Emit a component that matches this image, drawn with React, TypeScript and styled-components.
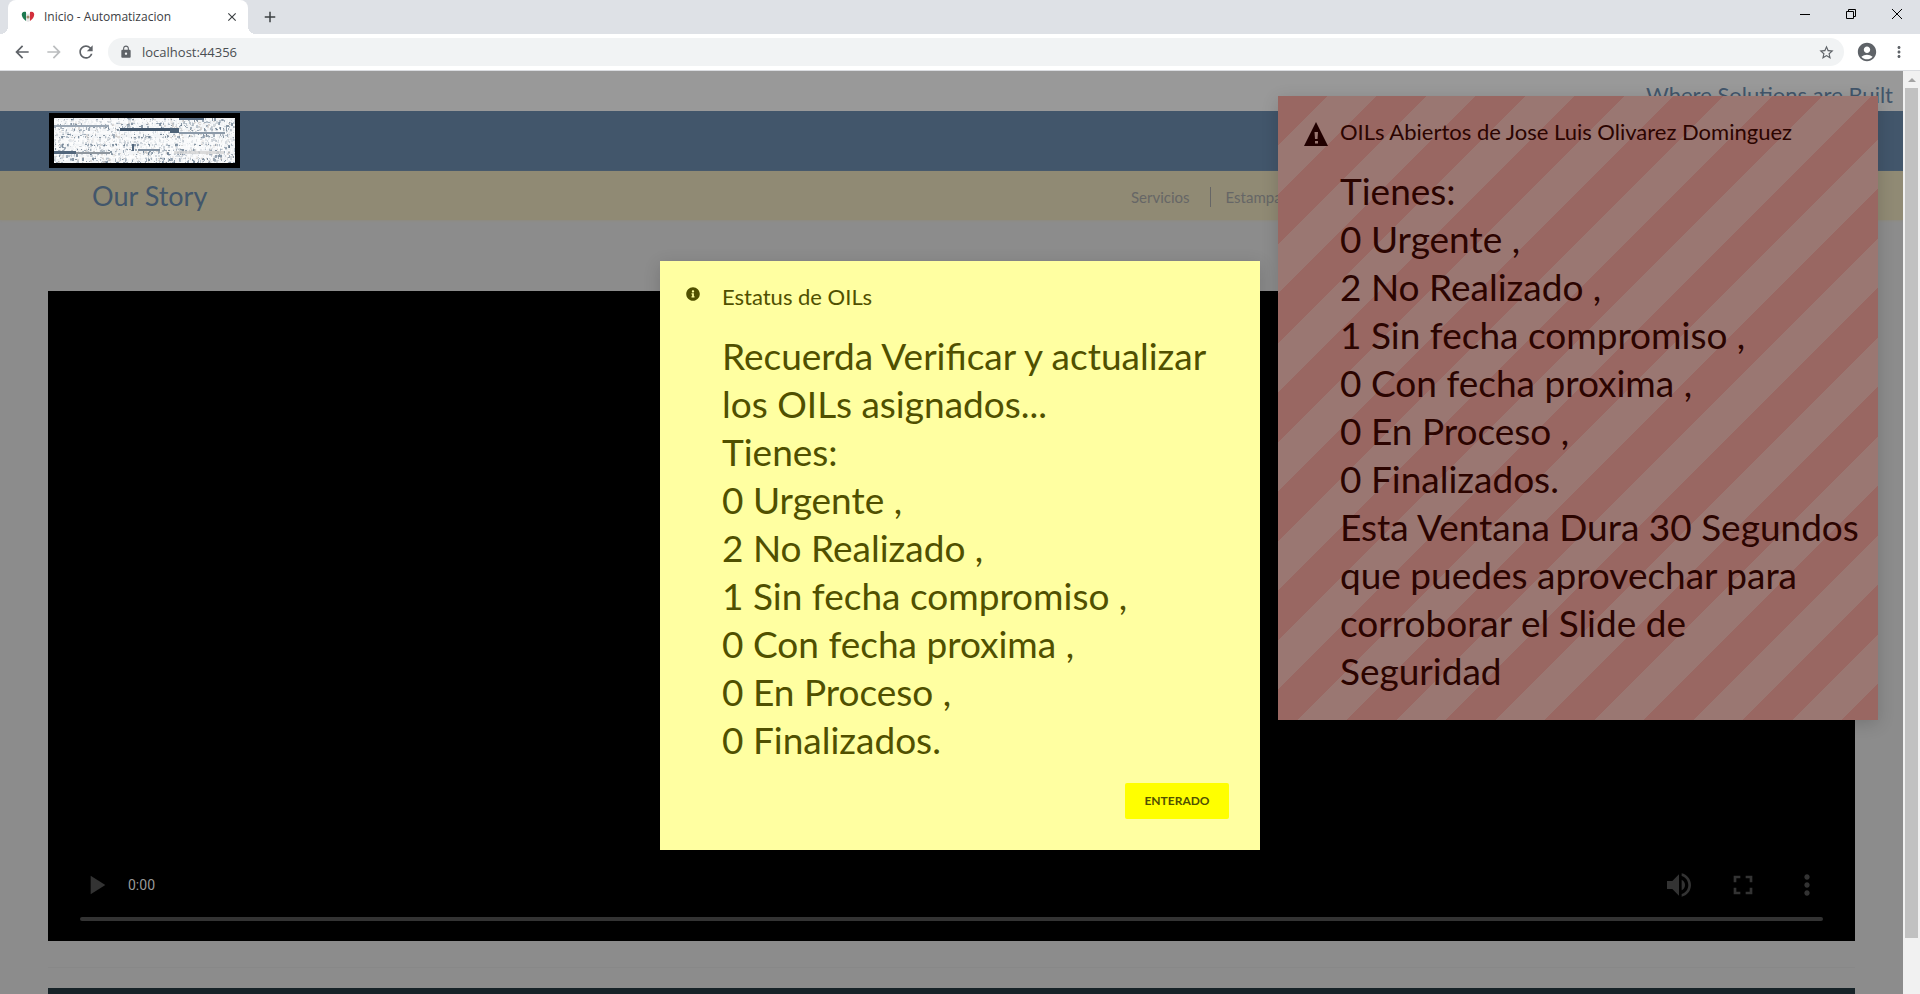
import React from "react";
import styled, { createGlobalStyle } from "styled-components";
import {
  MdArrowBack,
  MdArrowForward,
  MdRefresh,
  MdLock,
  MdStarBorder,
  MdAccountCircle,
  MdMoreVert,
  MdPlayArrow,
  MdVolumeUp,
  MdFullscreen,
  MdClose,
  MdAdd,
} from "react-icons/md";
import { FaInfoCircle } from "react-icons/fa";

const GlobalStyle = createGlobalStyle`
  *, *::before, *::after { box-sizing: border-box; }
  body { margin: 0; font-family: Lato, "Liberation Sans", sans-serif; }
  h1, h2, p, ul { margin: 0; padding: 0; font-weight: 400; }
  ul { list-style: none; }
  a { color: inherit; text-decoration: none; }
`;

const Window = styled.div`
  height: 100vh;
  display: flex;
  flex-direction: column;
  overflow: hidden;
`;

/* ---------- browser frame ---------- */
const TabStrip = styled.div`
  height: 34px;
  flex: none;
  display: flex;
  background: #dee1e6;
  padding-left: 8px;
`;
const Tab = styled.div`
  position: relative;
  width: 240px;
  display: flex;
  align-items: center;
  gap: 9px;
  padding: 0 9px 0 13px;
  background: #fff;
  border-radius: 8px 8px 0 0;
  font: 12px/16px "Open Sans", sans-serif;
  color: #3c4043;
  &::before, &::after {
    content: "";
    position: absolute;
    bottom: 0;
    width: 8px;
    height: 8px;
  }
  &::before {
    left: -8px;
    background: radial-gradient(circle at 0 0, transparent 8px, #fff 8px);
  }
  &::after {
    right: -8px;
    background: radial-gradient(circle at 100% 0, transparent 8px, #fff 8px);
  }
`;
const TabTitle = styled.span`
  flex: 1;
  white-space: nowrap;
`;
const IconButton = styled.button<{ $size: number; $color?: string }>`
  display: flex;
  align-items: center;
  justify-content: center;
  border: 0;
  padding: 0;
  background: none;
  width: ${(p) => p.$size}px;
  height: ${(p) => p.$size}px;
  color: ${(p) => p.$color ?? "#5f6368"};
  svg { width: 100%; height: 100%; }
`;
const NewTab = styled.div`
  display: flex;
  align-items: center;
  padding-left: 13px;
`;
const WindowControls = styled.div`
  margin-left: auto;
  display: flex;
  align-items: center;
  gap: 36px;
  padding: 0 18px 6px 0;
`;
const Toolbar = styled.div`
  height: 37px;
  flex: none;
  display: flex;
  align-items: center;
  padding: 0 12px 0 12px;
  background: #fff;
  border-bottom: 1px solid #dadce0;
`;
const NavButtons = styled.div`
  display: flex;
  gap: 12px;
  margin-right: 12px;
`;
const Address = styled.div`
  flex: 1;
  height: 28px;
  display: flex;
  align-items: center;
  gap: 9px;
  padding: 0 9px 0 11px;
  border-radius: 14px;
  background: #f1f3f4;
  color: #5f6368;
`;
const Url = styled.input`
  flex: 1;
  min-width: 0;
  border: 0;
  padding: 0;
  background: none;
  font: 13px/20px "Open Sans", sans-serif;
  color: #4a4e52;
`;
const ToolbarEnd = styled.div`
  display: flex;
  align-items: center;
  gap: 12px;
  margin-left: 12px;
`;

/* ---------- page ---------- */
const Viewport = styled.div`
  position: relative;
  flex: 1;
  min-height: 0;
  display: flex;
  overflow: hidden;
`;
const Page = styled.div`
  flex: 1;
  min-width: 0;
  background: #8c8c8c;
`;
const Tagline = styled.p`
  height: 40px;
  padding: 8px 10px 0 0;
  background: #999;
  color: #42566b;
  text-align: right;
  font-size: 22px;
  line-height: 32px;
`;
const Brand = styled.header`
  height: 60px;
  padding: 2px 49px;
  background: #42566b;
`;
const Logo = styled.svg`
  display: block;
  width: 191px;
  height: 55px;
  border: 5px solid #000;
  background: #e4e8ec;
`;
const SubHeader = styled.div`
  height: 49px;
  display: flex;
  align-items: center;
  background: #908a74;
  box-shadow: 0 1px 2px #8e8b80;
`;
const Story = styled.h1`
  flex: 1;
  padding: 0 0 0 92px;
  color: #42566b;
  font-size: 27px;
  line-height: 32px;
`;
const Menu = styled.ul`
  display: flex;
  width: 772px;
  padding-top: 3px;
  font-size: 15px;
  line-height: 20px;
  color: #666;
`;
const MenuItem = styled.li`
  padding: 0 20px 0 15px;
  & + & { border-left: 1px solid #666; }
  &:first-child { padding-left: 0; }
`;
const Main = styled.main`
  padding: 71px 48px 0;
`;
const Video = styled.section`
  aspect-ratio: 1807 / 650;
  display: flex;
  flex-direction: column;
  justify-content: flex-end;
  padding: 0 32px 20px;
  background: #000;
  color: #333;
`;
const Controls = styled.div`
  display: flex;
  align-items: center;
  gap: 32px;
  padding-bottom: 16px;
`;
const Time = styled.span`
  flex: 1;
  margin-left: -16px;
  font: 14px/20px Roboto, sans-serif;
  color: #999;
`;
const Progress = styled.input`
  appearance: none;
  width: 100%;
  height: 4px;
  margin: 0;
  border-radius: 2px;
  background: #333;
  &::-webkit-slider-thumb { appearance: none; width: 0; height: 0; }
`;
const Rule = styled.hr`
  margin: 26px 0 20px;
  border: 0;
  border-top: 1px solid #888;
`;
const Footer = styled.div`
  height: 60px;
  background: #172328;
`;
const Scrollbar = styled.div`
  width: 17px;
  flex: none;
  display: flex;
  flex-direction: column;
  align-items: center;
  gap: 6px;
  padding: 7px 2px 56px;
  background: #f1f1f1;
`;
const Thumb = styled.div`
  flex: 1;
  width: 13px;
  background: #c1c1c1;
`;

/* ---------- notices ---------- */
const Notice = styled.section`
  position: absolute;
  width: 600px;
  padding: 20px 16px 0 62px;
  font-size: 37px;
  line-height: 48px;
  box-shadow: 0 4px 16px rgba(0, 0, 0, 0.16);
`;
const Toast = styled(Notice)`
  top: 25px;
  right: 42px;
  padding-bottom: 25px;
  color: #2b0400;
  background: repeating-linear-gradient(
    135deg, #996762 0, #996762 35px, #9a7772 35px, #9a7772 70px);
`;
const Dialog = styled(Notice)`
  top: 190px;
  left: 50%;
  margin-left: -300px;
  padding-bottom: 31px;
  background: #ffffa1;
  color: #505000;
`;
const NoticeTitle = styled.h2`
  font-size: 22px;
  line-height: 32px;
  margin-bottom: 19px;
`;
const NoticeIcon = styled.span<{ $top: number }>`
  position: absolute;
  left: 26px;
  top: ${(p) => p.$top}px;
  display: flex;
`;
const Actions = styled.div`
  display: flex;
  justify-content: flex-end;
  padding: 19px 15px 0 0;
`;
const Accept = styled.button`
  width: 104px;
  height: 36px;
  border: 0;
  border-radius: 2px;
  background: #ff0;
  color: #505000;
  font: 700 12px/16px Lato, sans-serif;
`;

function logoMarks() {
  const shades = ["#5d7085", "#8192a3", "#a3afbc", "#c3cad2", "#ffffff", "#ffffff", "#ffffff", "#d0ccc9"];
  let seed = 7;
  const next = () => {
    seed = (seed * 16807) % 2147483647;
    return seed / 2147483647;
  };
  return Array.from({ length: 2200 }, (_, i) => {
    const x = Math.floor(next() * 181);
    const y = Math.floor(next() * 45);
    const shade = shades[Math.floor(next() * shades.length)];
    const w = 1 + Math.floor(next() * 2);
    const h = 1 + Math.floor(next() * 3);
    return <rect key={i} x={x} y={y} width={w} height={h} fill={shade} opacity={0.7} />;
  });
}

const BrandLogo = () => (
  <Logo viewBox="0 0 181 45" preserveAspectRatio="none" aria-label="Logo">
    <rect width="181" height="45" fill="#f2f4f6" />
    {logoMarks()}
    <g fill="#fff" opacity="0.6">
      <rect y="2" width="120" height="3" />
      <rect y="13" width="181" height="3" />
      <rect y="20" width="181" height="6" />
      <rect y="28" x="20" width="150" height="3" />
      <rect y="37" x="30" width="130" height="3" />
    </g>
    <rect x="66" y="10" width="58" height="3" fill="#42566b" />
    <rect x="116" y="10" width="9" height="5" fill="#4e6277" />
    <rect x="125" width="25" height="2" fill="#5d7085" />
    <rect x="125" y="14" width="46" height="2" fill="#8c9aa9" />
    <rect y="7" width="55" height="2" fill="#9aa6b3" />
    <rect y="33" width="22" height="3" fill="#52667b" />
    <rect x="22" y="34" width="34" height="2" fill="#8f979f" />
    <rect x="78" y="26" width="2" height="7" fill="#52667b" />
    <rect x="84" y="31" width="22" height="2" fill="#7f8fa0" />
    <rect x="120" y="33" width="50" height="3" fill="#d4d4d4" opacity="0.8" />
  </Logo>
);

const Counts = () => (
  <>
    <p>Tienes:</p>
    <p>0 Urgente ,</p>
    <p>2 No Realizado ,</p>
    <p>1 Sin fecha compromiso ,</p>
    <p>0 Con fecha proxima ,</p>
    <p>0 En Proceso ,</p>
    <p>0 Finalizados.</p>
  </>
);

export default function App() {
  return (
    <Window>
      <GlobalStyle />
      <TabStrip>
        <Tab>
          <svg width="14" height="14" viewBox="0 0 14 14">
            <path d="M5 2C2 1 0 3 1 6c1 3 3 4 4 5z" fill="#1d7a50" />
            <path d="M9 2c3-1 5 1 4 4-1 3-3 4-4 5z" fill="#d32f3c" />
            <path d="M5 3l2 1 2-1v8l-2 1-2-1z" fill="#e6e6e6" />
            <circle cx="7" cy="7" r="1.5" fill="#a08c6c" />
          </svg>
          <TabTitle>Inicio - Automatizacion</TabTitle>
          <IconButton $size={14} $color="#3c4043" aria-label="Cerrar"><MdClose /></IconButton>
        </Tab>
        <NewTab>
          <IconButton $size={18} $color="#3c4043" aria-label="Nueva"><MdAdd /></IconButton>
        </NewTab>
        <WindowControls>
          <IconButton $size={10} aria-label="Minimizar">
            <svg viewBox="0 0 10 10"><path d="M0 5.5h10" stroke="#000" /></svg>
          </IconButton>
          <IconButton $size={10} aria-label="Restaurar">
            <svg viewBox="0 0 10 10" fill="none" stroke="#000"><path d="M.5 2.5h7v7h-7zM2.500 2.500v-2h7v7h-2" /></svg>
          </IconButton>
          <IconButton $size={10} aria-label="Salir">
            <svg viewBox="0 0 10 10"><path d="M0 0l10 10M10 0L0 10" stroke="#000" /></svg>
          </IconButton>
        </WindowControls>
      </TabStrip>
      <Toolbar>
        <NavButtons>
          <IconButton $size={20} aria-label="Atrás"><MdArrowBack /></IconButton>
          <IconButton $size={20} $color="#bbbdbf" aria-label="Adelante"><MdArrowForward /></IconButton>
          <IconButton $size={20} aria-label="Recargar"><MdRefresh /></IconButton>
        </NavButtons>
        <Address>
          <MdLock size={14} />
          <Url aria-label="Dirección" defaultValue="localhost:44356" />
          <IconButton $size={17} aria-label="Favorito"><MdStarBorder /></IconButton>
        </Address>
        <ToolbarEnd>
          <IconButton $size={22} aria-label="Perfil"><MdAccountCircle /></IconButton>
          <IconButton $size={18} aria-label="Menú"><MdMoreVert /></IconButton>
        </ToolbarEnd>
      </Toolbar>

      <Viewport>
        <Page>
          <Tagline>Where Solutions are Built</Tagline>
          <Brand><BrandLogo /></Brand>
          <SubHeader>
            <Story>Our Story</Story>
            <Menu>
              <MenuItem><a href="#servicios">Servicios</a></MenuItem>
              <MenuItem><a href="#estampado">Estampado</a></MenuItem>
            </Menu>
          </SubHeader>
          <Main>
            <Video>
              <Controls>
                <IconButton $size={32} $color="#333" aria-label="Reproducir"><MdPlayArrow /></IconButton>
                <Time>0:00</Time>
                <IconButton $size={32} $color="#333" aria-label="Volumen"><MdVolumeUp /></IconButton>
                <IconButton $size={32} $color="#333" aria-label="Pantalla completa"><MdFullscreen /></IconButton>
                <IconButton $size={32} $color="#333" aria-label="Opciones"><MdMoreVert /></IconButton>
              </Controls>
              <Progress type="range" defaultValue={0} aria-label="Progreso" />
            </Video>
            <Rule />
            <Footer />
          </Main>
        </Page>
        <Scrollbar>
          <svg width="8" height="4" viewBox="0 0 8 4"><path d="M0 4l4-4 4 4z" fill="#a3a3a3" /></svg>
          <Thumb />
        </Scrollbar>

        <Toast role="alert">
          <NoticeIcon $top={26}>
            <svg width="24" height="24" viewBox="0 0 24 24">
              <path d="M12 0l12 24H0z" fill="#210000" />
              <path d="M10.500 10h3.500l-.5 7h-2.500zM11 19h3v2.500h-3z" fill="#9a7772" />
            </svg>
          </NoticeIcon>
          <NoticeTitle>OILs Abiertos de Jose Luis Olivarez Dominguez</NoticeTitle>
          <Counts />
          <p>
            Esta Ventana Dura 30 Segundos que puedes aprovechar para corroborar el Slide de
            <br />
            Seguridad
          </p>
        </Toast>

        <Dialog role="dialog" aria-label="Estatus de OILs">
          <NoticeIcon $top={26}><FaInfoCircle size={14} /></NoticeIcon>
          <NoticeTitle>Estatus de OILs</NoticeTitle>
          <p>Recuerda Verificar y actualizar los OILs asignados...</p>
          <Counts />
          <Actions><Accept>ENTERADO</Accept></Actions>
        </Dialog>
      </Viewport>
    </Window>
  );
}
